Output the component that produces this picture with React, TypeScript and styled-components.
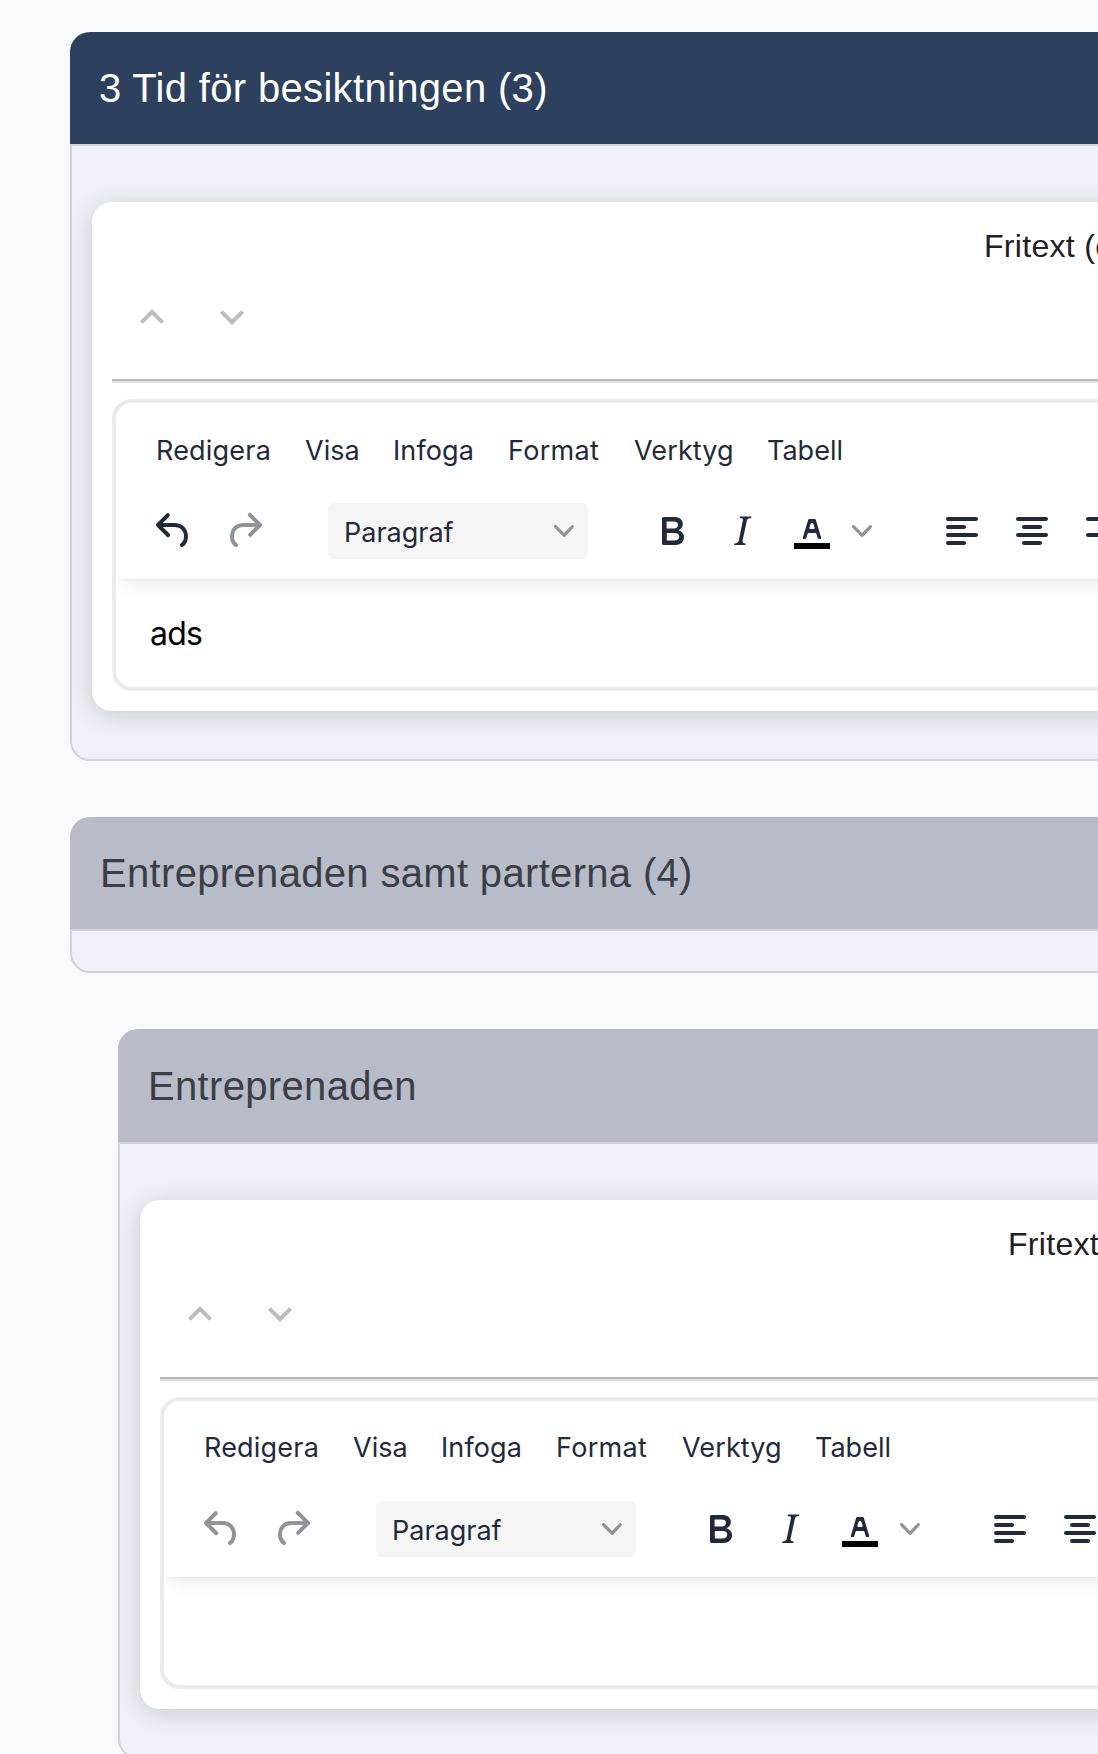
import React from "react";
import styled, { createGlobalStyle } from "styled-components";

const GlobalStyle = createGlobalStyle`
  *, *::before, *::after { box-sizing: border-box; }
  html, body { margin: 0; padding: 0; }
  body { background: #f8fafe; overflow: hidden; }
`;

const helvetica = `"Liberation Sans", Arial, sans-serif`;
const system = `Inter, "Liberation Sans", sans-serif`;
const ink = "#222a39";

const Page = styled.main`
  width: 100%;
  height: 1754px;
  overflow: hidden;
  padding: 32px 0 0 70px;
  display: flex;
  flex-direction: column;
  gap: 56px;
`;

const Panel = styled.section<{ $nested?: boolean }>`
  flex: none;
  width: 1400px;
  margin-left: ${(p) => (p.$nested ? 48 : 0)}px;
`;

const PanelHeader = styled.header<{ $active?: boolean; $nested?: boolean }>`
  height: ${(p) => (p.$nested ? 113 : 112)}px;
  padding: 0 0 0 ${(p) => (p.$active ? 29 : 30)}px;
  display: flex;
  align-items: center;
  border-radius: 20px 20px 0 0;
  background: ${(p) => (p.$active ? "#2d405e" : "#b8bcc9")};
  color: ${(p) => (p.$active ? "#fff" : "#3b3e45")};
`;

const PanelTitle = styled.h2`
  margin: 0;
  font: 400 40px/60px ${helvetica};
  letter-spacing: 0.33px;
  white-space: nowrap;
`;

const PanelBody = styled.div<{ $empty?: boolean }>`
  border: 2px solid #d1d5da;
  border-radius: 0 0 20px 20px;
  background: #eef1f6;
  padding: ${(p) => (p.$empty ? "40px 0 0" : "56px 20px 48px")};
`;

const Card = styled.article`
  height: 509px;
  padding: 20px;
  border-radius: 20px;
  background: #fff;
  box-shadow: 0 4px 24px rgba(0, 0, 0, 0.16);
  display: flex;
  flex-direction: column;
`;

const CardTitle = styled.h3<{ $indent: number }>`
  margin: 0;
  padding-left: ${(p) => p.$indent}px;
  font: 400 32px/48px ${helvetica};
  letter-spacing: 0.3px;
  color: #212121;
  white-space: nowrap;
`;

const MoveButtons = styled.div<{ $top: number }>`
  display: flex;
  height: 109px;
  padding-top: ${(p) => p.$top}px;
`;

const MoveButton = styled.button`
  width: 80px;
  height: 80px;
  padding: 16px;
  border: 0;
  background: none;
  color: #bdbdbd;
  svg { display: block; }
`;

const Divider = styled.hr`
  width: 100%;
  height: 4px;
  margin: 0 0 16px;
  border: 0;
  border-top: 2px solid #b9b9b9;
  background: #e0e0e0;
`;

const Editor = styled.div`
  height: 292px;
  border: 4px solid #ebebeb;
  border-radius: 20px;
  background: #fff;
  overflow: hidden;
`;

const EditorHeader = styled.div`
  height: 176px;
  background: #fff;
  box-shadow: 0 4px 4px -4px rgba(34, 47, 62, 0.1), 0 16px 16px -8px rgba(34, 47, 62, 0.07);
`;

const Menubar = styled.nav<{ $top: number }>`
  height: 94px;
  padding: ${(p) => p.$top}px 0 0 40px;
  display: flex;
  align-items: flex-start;
`;

const MenuItem = styled.span<{ $width: number; $tracking: number }>`
  flex: none;
  width: ${(p) => p.$width}px;
  font: 400 27px/40px ${system};
  letter-spacing: ${(p) => p.$tracking}px;
  color: ${ink};
  white-space: nowrap;
`;

const Toolbar = styled.div`
  display: flex;
  align-items: center;
  height: 68px;
  padding-left: 34px;
`;

const ToolGroup = styled.div<{ $gap: number; $after: number }>`
  display: flex;
  align-items: center;
  flex: none;
  gap: ${(p) => p.$gap}px;
  margin-right: ${(p) => p.$after}px;
`;

const Tool = styled.span<{ $disabled?: boolean }>`
  display: flex;
  flex: none;
  color: ${(p) => (p.$disabled ? "#909399" : ink)};
`;

const ColorTool = styled.span`
  display: flex;
  align-items: center;
  gap: 16px;
  color: ${ink};
`;

const FormatSelect = styled.div`
  width: 260px;
  height: 56px;
  padding: 0 14px 0 16px;
  border-radius: 6px;
  background: #f5f5f5;
  display: flex;
  align-items: center;
  justify-content: space-between;
  font: 400 27px/40px ${system};
  color: ${ink};
`;

const SelectLabel = styled.span`
  padding-top: 3px;
`;

const EditorContent = styled.p`
  margin: 0;
  padding: 33px 34px;
  font: 400 32px/44px ${system};
  letter-spacing: -0.8px;
  color: #000;
`;

const Icon = ({ children }: { children: React.ReactNode }) => (
  <svg width="48" height="48" viewBox="0 0 24 24" fill="currentColor">
    {children}
  </svg>
);

const Chevron = () => (
  <svg width="20" height="20" viewBox="0 0 10 10" fill="#909399">
    <path d="M8.7 2.2c.3-.3.8-.3 1 0 .4.4.4.9 0 1.2L5.7 7.8c-.3.3-.9.3-1.2 0L.2 3.4a.8.8 0 0 1 0-1.2c.3-.3.8-.3 1.1 0L5 6l3.7-3.8Z" />
  </svg>
);

const menu: [string, number, number][] = [
  ["Redigera", 149, 0.2],
  ["Visa", 88, 0],
  ["Infoga", 115, 0.1],
  ["Format", 126, 0.3],
  ["Verktyg", 133, 0.1],
  ["Tabell", 90, 0],
];

type FreeTextProps = {
  title: string;
  indent: number;
  text?: string;
  canUndo?: boolean;
  nested?: boolean;
};

function FreeText({ title, indent, text, canUndo, nested }: FreeTextProps) {
  return (
    <Card>
      <CardTitle $indent={indent}>{title}</CardTitle>
      <MoveButtons $top={nested ? 6 : 7}>
        <MoveButton aria-label="Flytta upp">
          <Icon><path d="M7.41 15.41 12 10.83l4.59 4.58L18 14l-6-6-6 6z" /></Icon>
        </MoveButton>
        <MoveButton aria-label="Flytta ner">
          <Icon><path d="M7.41 8.59 12 13.17l4.59-4.58L18 10l-6 6-6-6z" /></Icon>
        </MoveButton>
      </MoveButtons>
      <Divider />
      <Editor>
        <EditorHeader>
          <Menubar $top={nested ? 27 : 28}>
            {menu.map(([label, width, tracking]) => (
              <MenuItem key={label} $width={width} $tracking={tracking}>{label}</MenuItem>
            ))}
          </Menubar>
          <Toolbar>
            <ToolGroup $gap={22} $after={60}>
              <Tool $disabled={!canUndo}>
                <Icon><path d="M6.4 8H12c3.7 0 6.2 2 6.8 5.1.6 2.7-.4 5.6-2.3 6.8a1 1 0 0 1-1-1.8c1.1-.6 1.8-2.7 1.4-4.6-.5-2.1-2.1-3.5-4.9-3.5H6.4l3.3 3.3a1 1 0 1 1-1.4 1.4l-5-5a1 1 0 0 1 0-1.4l5-5a1 1 0 0 1 1.4 1.4L6.4 8Z" /></Icon>
              </Tool>
              <Tool $disabled>
                <Icon><path d="M17.6 10H12c-2.8 0-4.4 1.4-4.9 3.5-.4 2 .3 4 1.4 4.6a1 1 0 1 1-1 1.8c-2-1.2-2.9-4.1-2.3-6.8.6-3 3-5.1 6.8-5.1h5.6l-3.3-3.3a1 1 0 1 1 1.4-1.4l5 5a1 1 0 0 1 0 1.4l-5 5a1 1 0 0 1-1.4-1.4l3.3-3.3Z" /></Icon>
              </Tool>
            </ToolGroup>
            <ToolGroup $gap={0} $after={60}>
              <FormatSelect><SelectLabel>Paragraf</SelectLabel><Chevron /></FormatSelect>
            </ToolGroup>
            <ToolGroup $gap={22} $after={66}>
              <Tool>
                <Icon><path d="M7.8 19c-.3 0-.5 0-.6-.2l-.2-.5V5.7c0-.2 0-.4.2-.5l.6-.2h5c1.5 0 2.7.3 3.5 1 .7.6 1.1 1.4 1.1 2.5a3 3 0 0 1-.6 1.9c-.4.6-1 1-1.6 1.2.4.1.9.3 1.3.6s.8.7 1 1.2c.4.4.5 1 .5 1.6 0 1.3-.4 2.3-1.3 3-.8.7-2.1 1-3.8 1H7.8Zm5-8.3c.6 0 1.2-.1 1.6-.5.4-.3.6-.7.6-1.3 0-1.1-.8-1.7-2.3-1.7H9.3v3.5h3.4Zm.5 6c.7 0 1.3-.1 1.7-.4.4-.4.6-.9.6-1.5s-.2-1-.7-1.4c-.4-.3-1-.4-2-.4H9.4v3.8h4Z" /></Icon>
              </Tool>
              <Tool>
                <Icon><path d="m16.7 4.7-.1.9h-.3c-.6 0-1 0-1.4.3-.3.3-.4.6-.5 1.1l-2.1 9.8v.6c0 .5.4.8 1.4.8h.2l-.2.8H8l.2-.8h.2c1.1 0 1.8-.5 2-1.5l2-9.8.1-.5c0-.6-.4-.8-1.4-.8h-.3l.2-.9h5.8Z" /></Icon>
              </Tool>
              <ColorTool>
                <Icon>
                  <path fill="#000" d="M3 18h18v3H3z" />
                  <path d="M8.7 16h-.8a.5.5 0 0 1-.5-.6l2.7-9c.1-.3.3-.4.5-.4h2.8c.2 0 .4.1.5.4l2.7 9a.5.5 0 0 1-.5.6h-.8a.5.5 0 0 1-.4-.4l-.7-2.2c0-.3-.3-.4-.5-.4h-3.4c-.2 0-.4.1-.5.4l-.7 2.2c0 .3-.2.4-.4.4Zm2.6-7.6-.6 2a.5.5 0 0 0 .5.6h1.6a.5.5 0 0 0 .5-.6l-.6-2c0-.3-.3-.4-.5-.4h-.4c-.2 0-.4.1-.5.4Z" />
                </Icon>
                <Chevron />
              </ColorTool>
            </ToolGroup>
            <ToolGroup $gap={22} $after={0}>
              <Tool>
                <Icon><path d="M5 5h14c.6 0 1 .4 1 1s-.4 1-1 1H5a1 1 0 1 1 0-2Zm0 4h8c.6 0 1 .4 1 1s-.4 1-1 1H5a1 1 0 1 1 0-2Zm0 8h8c.6 0 1 .4 1 1s-.4 1-1 1H5a1 1 0 0 1 0-2Zm0-4h14c.6 0 1 .4 1 1s-.4 1-1 1H5a1 1 0 0 1 0-2Z" /></Icon>
              </Tool>
              <Tool>
                <Icon><path d="M5 5h14c.6 0 1 .4 1 1s-.4 1-1 1H5a1 1 0 1 1 0-2Zm3 4h8c.6 0 1 .4 1 1s-.4 1-1 1H8a1 1 0 1 1 0-2Zm0 8h8c.6 0 1 .4 1 1s-.4 1-1 1H8a1 1 0 0 1 0-2Zm-3-4h14c.6 0 1 .4 1 1s-.4 1-1 1H5a1 1 0 0 1 0-2Z" /></Icon>
              </Tool>
              <Tool>
                <Icon><path d="M5 5h14c.6 0 1 .4 1 1s-.4 1-1 1H5a1 1 0 1 1 0-2Zm6 4h8c.6 0 1 .4 1 1s-.4 1-1 1h-8a1 1 0 0 1 0-2Zm0 8h8c.6 0 1 .4 1 1s-.4 1-1 1h-8a1 1 0 0 1 0-2Zm-6-4h14c.6 0 1 .4 1 1s-.4 1-1 1H5a1 1 0 0 1 0-2Z" /></Icon>
              </Tool>
            </ToolGroup>
          </Toolbar>
        </EditorHeader>
        {text && <EditorContent>{text}</EditorContent>}
      </Editor>
    </Card>
  );
}

export default function App() {
  return (
    <>
      <GlobalStyle />
      <Page>
        <Panel>
          <PanelHeader $active>
            <PanelTitle>3 Tid för besiktningen (3)</PanelTitle>
          </PanelHeader>
          <PanelBody>
            <FreeText title="Fritext (e" indent={872} text="ads" canUndo />
          </PanelBody>
        </Panel>
        <Panel>
          <PanelHeader>
            <PanelTitle>Entreprenaden samt parterna (4)</PanelTitle>
          </PanelHeader>
          <PanelBody $empty />
        </Panel>
        <Panel $nested>
          <PanelHeader $nested>
            <PanelTitle>Entreprenaden</PanelTitle>
          </PanelHeader>
          <PanelBody>
            <FreeText title="Fritext" indent={848} nested />
          </PanelBody>
        </Panel>
      </Page>
    </>
  );
}
